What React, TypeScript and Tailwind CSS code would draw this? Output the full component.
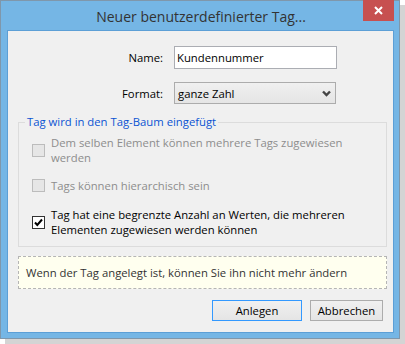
import React from "react";

function Check({ disabled, checked }: { disabled?: boolean; checked?: boolean }) {
  return (
    <div
      className={
        "w-[13px] h-[13px] shrink-0 border flex items-center justify-center " +
        (disabled ? "border-[#bcbcbc] bg-[#e6e6e6]" : "border-[#333333] bg-white")
      }
    >
      {checked && (
        <svg width="11" height="11" viewBox="0 0 11 11">
          <polyline points="2,5.5 4.3,8 9,2.5" fill="none" stroke="#000" strokeWidth="2" />
        </svg>
      )}
    </div>
  );
}

export default function App() {
  return (
    <div className="w-[405px] h-[344px] bg-white font-['Open_Sans',sans-serif] text-[11.3px] leading-[15px]">
      <div className="relative w-[400px] h-[339px] border border-[#7f97ab] bg-[#75b6e5] shadow-[5px_5px_0_0_#d4d4d4] flex flex-col">
        <div className="h-[29px] flex items-center justify-center text-[14px] text-[#333333] pt-[1px] pl-[2px]">
          Neuer benutzerdefinierter Tag...
        </div>
        <div className="absolute top-[-1px] left-[362px] w-[31px] h-[21px] bg-[#c75050] flex items-center justify-center">
          <svg width="9" height="9" viewBox="0 0 9 9">
            <path d="M1 1 L8 8 M8 1 L1 8" stroke="#fff" strokeWidth="2" />
          </svg>
        </div>
        <div className="ml-[6px] mr-[5px] h-[303px] border border-[#5c9fd6] bg-[#f0f0f0] overflow-hidden">
          <div className="mt-[15px] grid grid-cols-[155px_163px] gap-x-[11px] gap-y-[13px] items-center">
            <div className="text-right text-black">Name:</div>
            <div className="h-[23px] w-[163px] border border-[#abadb3] bg-white flex items-center pl-[2px] text-black">
              Kundennummer
            </div>
            <div className="text-right text-black">Format:</div>
            <div className="h-[22px] w-[162px] border border-[#acacac] bg-gradient-to-b from-[#f0f0f0] to-[#e5e5e5] flex items-center justify-between pl-[3px] pr-[4px] text-black">
              <span>ganze Zahl</span>
              <svg width="9" height="7" viewBox="0 0 9 7">
                <polyline points="1,1.5 4.5,5 8,1.5" fill="none" stroke="#444" strokeWidth="2.4" />
              </svg>
            </div>
          </div>
          <fieldset className="mt-[10px] ml-[10px] w-[369px] border border-[#dcdcdc] pl-[6px] pt-[5px] pb-[9px]">
            <legend className="px-[2px] text-[#0b54d3] leading-[16px]">Tag wird in den Tag-Baum eingefügt</legend>
            <div className="pl-[7px] flex flex-col">
              <div className="flex items-center gap-[6px] text-[#8d8d8d]">
                <Check disabled />
                <div>
                  Dem selben Element können mehrere Tags zugewiesen
                  <br />
                  werden
                </div>
              </div>
              <div className="mt-[13px] flex items-center gap-[6px] text-[#8d8d8d]">
                <Check disabled />
                <div>Tags können hierarchisch sein</div>
              </div>
              <div className="mt-[14px] flex items-center gap-[6px] text-black">
                <Check checked />
                <div>
                  Tag hat eine begrenzte Anzahl an Werten, die mehreren
                  <br />
                  Elementen zugewiesen werden können
                </div>
              </div>
            </div>
          </fieldset>
          <div className="mt-[9px] ml-[10px] w-[369px] h-[33px] border border-dashed border-[#b5b5b5] bg-[#ffffef] flex items-center pl-[7px] text-[#333333]">
            Wenn der Tag angelegt ist, können Sie ihn nicht mehr ändern
          </div>
          <div className="mt-[11px] mr-[10px] flex justify-end gap-[8px]">
            <div className="w-[90px] h-[21px] border border-[#3399ff] bg-gradient-to-b from-[#f0f0f0] to-[#e5e5e5] flex items-center justify-center text-black">
              Anlegen
            </div>
            <div className="w-[73px] h-[21px] border border-[#acacac] bg-gradient-to-b from-[#f0f0f0] to-[#e5e5e5] flex items-center justify-center text-black">
              Abbrechen
            </div>
          </div>
        </div>
      </div>
    </div>
  );
}
